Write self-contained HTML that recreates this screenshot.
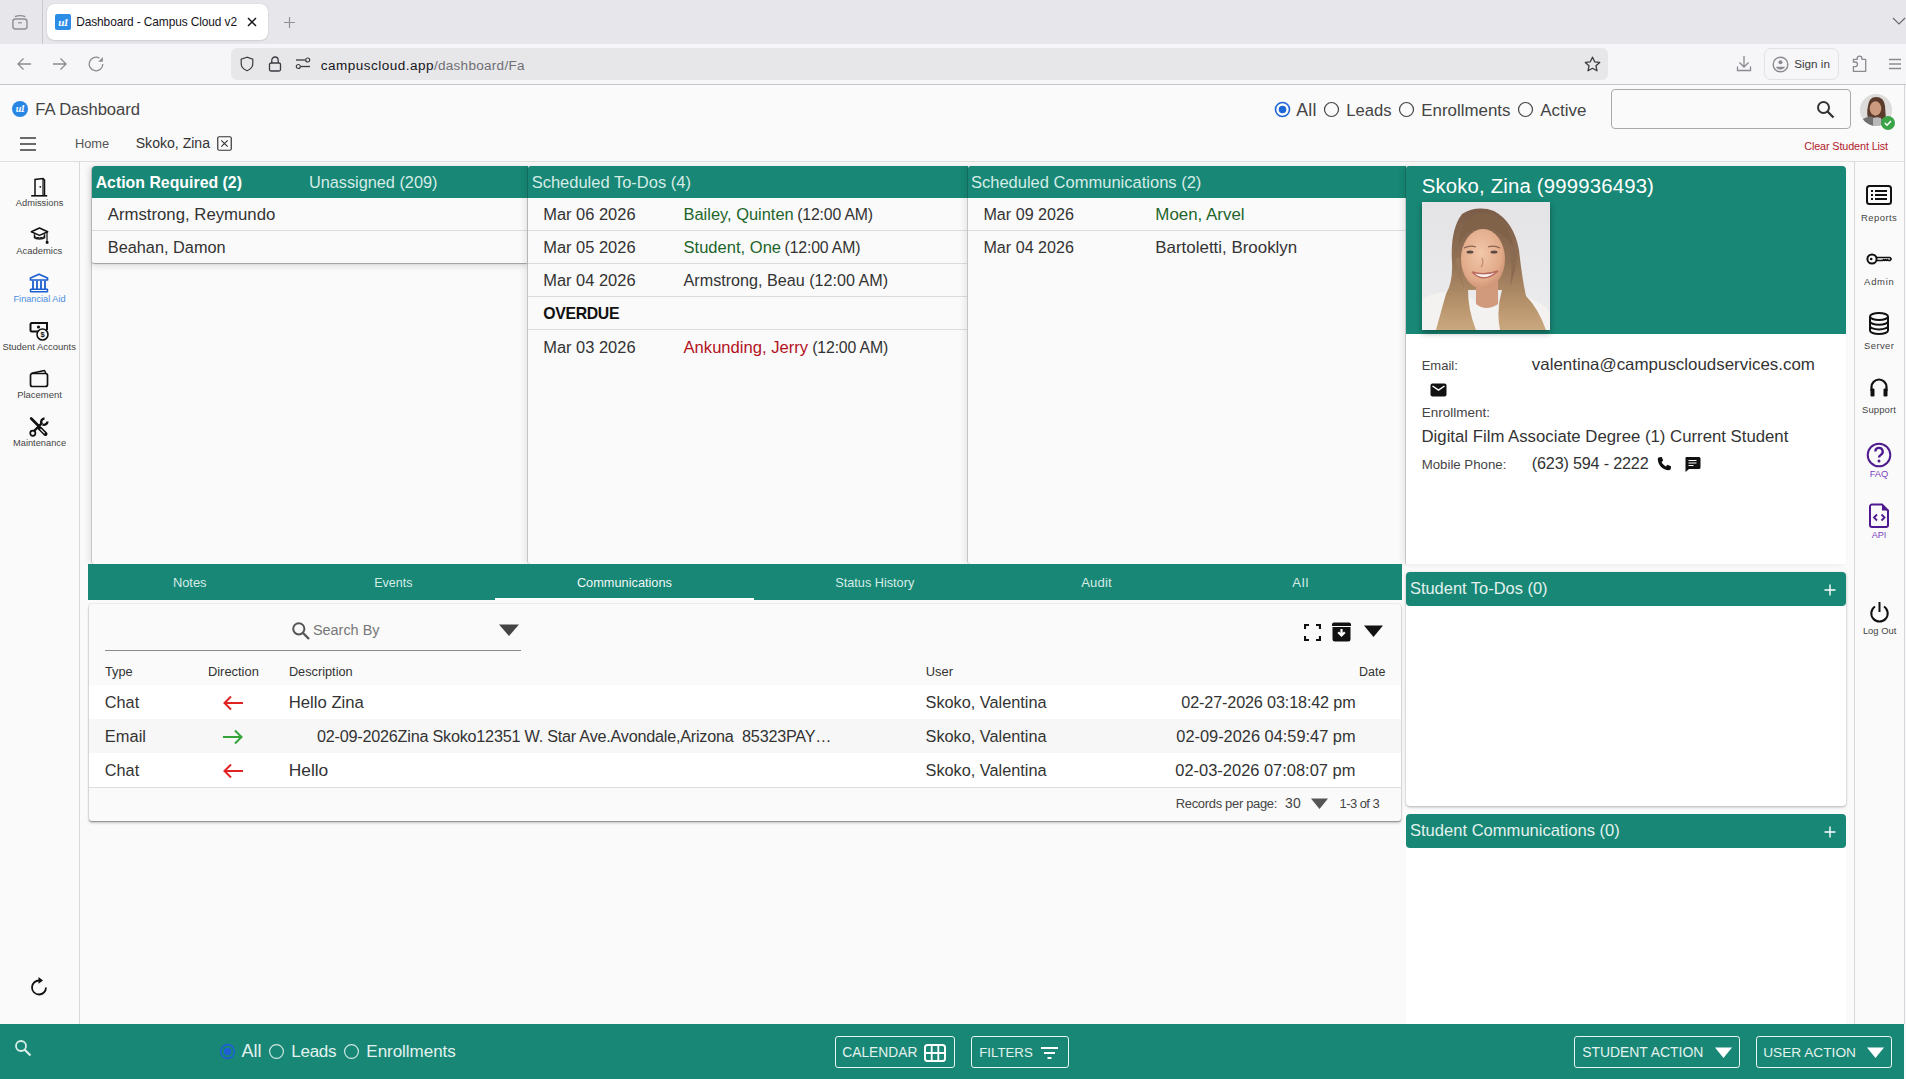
<!DOCTYPE html><html><head><meta charset="utf-8"><title>Dashboard - Campus Cloud v2</title><style>
*{margin:0;padding:0;box-sizing:border-box}
html,body{width:1906px;height:1079px;overflow:hidden;background:#fafafa;font-family:"Liberation Sans",sans-serif}
.t{position:absolute;white-space:pre;line-height:1}
</style></head><body>
<div style="position:absolute;left:0px;top:0px;width:1906px;height:44px;background:#e7e6eb"></div>
<div style="position:absolute;left:42px;top:0px;width:1px;height:44px;background:#c9c8cf"></div>
<div style="position:absolute;left:47px;top:4px;width:221px;height:36px;background:#fff;border-radius:7px;box-shadow:0 0 1px rgba(0,0,0,.25),0 1px 2px rgba(0,0,0,.08)"></div>
<svg style="position:absolute;left:11px;top:13px;" width="18" height="18" viewBox="0 0 18 18"><rect x="1.9" y="6" width="14.1" height="10" rx="2.6" fill="none" stroke="#8e8e94" stroke-width="1.4"/><path d="M3.9 3.6Q9 1.6 14.3 3.6" fill="none" stroke="#8e8e94" stroke-width="1.3"/><path d="M7 9.8h3.8" stroke="#8e8e94" stroke-width="1.2"/></svg>
<div style="position:absolute;left:55px;top:14px;width:16px;height:16px;background:#2b8de6;border-radius:2px;color:#fff;font:italic bold 11px/16px 'Liberation Serif',serif;text-align:center;letter-spacing:-1px">u1</div>
<svg style="position:absolute;left:246px;top:16px;" width="12" height="12" viewBox="0 0 12 12"><path d="M2 2L10 10M10 2L2 10" stroke="#15141a" stroke-width="1.5"/></svg>
<svg style="position:absolute;left:283px;top:16px;" width="13" height="13" viewBox="0 0 13 13"><path d="M6.5 1v11M1 6.5h11" stroke="#8f8f95" stroke-width="1.2"/></svg>
<svg style="position:absolute;left:1892px;top:16px;" width="14" height="10" viewBox="0 0 14 10"><path d="M1 2l6 6 6-6" fill="none" stroke="#6a6a70" stroke-width="1.2"/></svg>
<div style="position:absolute;left:0px;top:44px;width:1906px;height:40px;background:#f6f6f8"></div>
<div style="position:absolute;left:0px;top:84px;width:1906px;height:1px;background:#c6c6c8"></div>
<svg style="position:absolute;left:16px;top:56px;" width="16" height="16" viewBox="0 0 16 16"><path d="M15 8H2M7.5 2.5L2 8l5.5 5.5" fill="none" stroke="#8a8a90" stroke-width="1.3"/></svg>
<svg style="position:absolute;left:52px;top:56px;" width="16" height="16" viewBox="0 0 16 16"><path d="M1 8h13M8.5 2.5L14 8l-5.5 5.5" fill="none" stroke="#8a8a90" stroke-width="1.3"/></svg>
<svg style="position:absolute;left:87px;top:55px;" width="18" height="18" viewBox="0 0 18 18"><path d="M15.8 9A6.8 6.8 0 1 1 12.4 3.1" fill="none" stroke="#8a8a90" stroke-width="1.3"/><path d="M11.2 6.7h4.7V2z" fill="#8a8a90"/></svg>
<div style="position:absolute;left:231px;top:48px;width:1377px;height:32px;background:#e7e7e9;border-radius:6px"></div>
<svg style="position:absolute;left:239px;top:56px;" width="16" height="16" viewBox="0 0 16 16"><path d="M8 1.2L2.2 3.2v4.3c0 3.4 2.5 5.9 5.8 7.2 3.3-1.3 5.8-3.8 5.8-7.2V3.2z" fill="none" stroke="#3a3a40" stroke-width="1.2"/></svg>
<svg style="position:absolute;left:267px;top:55px;" width="16" height="17" viewBox="0 0 16 17"><rect x="2.5" y="8" width="11" height="8" rx="1.5" fill="none" stroke="#3a3a40" stroke-width="1.3"/><path d="M4.8 8V5.2a3.2 3.2 0 0 1 6.4 0V8" fill="none" stroke="#3a3a40" stroke-width="1.3"/></svg>
<svg style="position:absolute;left:295px;top:57px;" width="16" height="13" viewBox="0 0 16 13"><circle cx="3.3" cy="9.5" r="2" fill="none" stroke="#3a3a40" stroke-width="1.2"/><path d="M6 9.5h9" stroke="#3a3a40" stroke-width="1.3"/><circle cx="12.7" cy="3" r="2" fill="none" stroke="#3a3a40" stroke-width="1.2"/><path d="M1 3h9" stroke="#3a3a40" stroke-width="1.3"/></svg>
<svg style="position:absolute;left:1584px;top:56px;" width="17" height="16" viewBox="0 0 17 16"><path d="M8.5 1.2l2.2 4.6 5 .6-3.7 3.4 1 5-4.5-2.5-4.5 2.5 1-5L1.3 6.4l5-.6z" fill="none" stroke="#3a3a40" stroke-width="1.3" stroke-linejoin="round"/></svg>
<svg style="position:absolute;left:1736px;top:55px;" width="16" height="17" viewBox="0 0 16 17"><path d="M8 1v11M3.5 7.5L8 12l4.5-4.5" fill="none" stroke="#8a8a90" stroke-width="1.3"/><path d="M1.5 11.5v4h13v-4" fill="none" stroke="#8a8a90" stroke-width="1.3"/></svg>
<div style="position:absolute;left:1764px;top:48px;width:75px;height:32px;border:1px solid #e2e2e6;border-radius:7px;background:#f6f6f8"></div>
<svg style="position:absolute;left:1772px;top:56px;" width="17" height="17" viewBox="0 0 17 17"><circle cx="8.5" cy="8.5" r="7.3" fill="none" stroke="#8a8a90" stroke-width="1.4"/><circle cx="8.5" cy="6.3" r="2" fill="#8a8a90"/><path d="M4.3 10.8h8.4v1a5.8 5.8 0 0 1-8.4 0z" fill="#8a8a90"/></svg>
<svg style="position:absolute;left:1851px;top:55px;" width="17" height="17" viewBox="0 0 17 17"><path d="M2.4 16.3V11.6h1.8a2.3 2.3 0 0 0 0-4.6H2.4V4.4H6.2V3.6a2.4 2.4 0 0 1 4.8 0v.8h3.7v11.9z" fill="none" stroke="#8a8a90" stroke-width="1.3" stroke-linejoin="round"/></svg>
<svg style="position:absolute;left:1888px;top:58px;" width="14" height="12" viewBox="0 0 14 12"><path d="M1 1.5h12M1 6h12M1 10.5h12" stroke="#8a8a90" stroke-width="1.3"/></svg>
<div style="position:absolute;left:1904px;top:85px;width:1px;height:939px;background:#d6d6d6"></div>
<div style="position:absolute;left:1905px;top:85px;width:1px;height:994px;background:#f9f9fb"></div>
<div style="position:absolute;left:0px;top:161px;width:1904px;height:1px;background:#dedede"></div>
<div style="position:absolute;left:12px;top:101px;width:16px;height:16px;background:#2a86e4;border-radius:50%;color:#fff;font:italic bold 10px/16px 'Liberation Serif',serif;text-align:center;letter-spacing:-1px">u1</div>
<svg style="position:absolute;left:19px;top:136px;" width="18" height="16" viewBox="0 0 18 16"><path d="M1 2h16M1 8h16M1 14h16" stroke="#3a3a3a" stroke-width="1.7"/></svg>
<svg style="position:absolute;left:217px;top:136px;" width="15" height="15" viewBox="0 0 15 15"><rect x="0.75" y="0.75" width="13.5" height="13.5" rx="1.5" fill="none" stroke="#333" stroke-width="1.2"/><path d="M4.3 4.3l6.4 6.4M10.7 4.3l-6.4 6.4" stroke="#333" stroke-width="1.1"/></svg>
<svg style="position:absolute;left:1274.0px;top:101.3px;" width="17.0" height="17.0" viewBox="0 0 17.0 17.0"><circle cx="8.5" cy="8.5" r="7.0" fill="none" stroke="#1f66d6" stroke-width="1.6"/><circle cx="8.5" cy="8.5" r="3.75" fill="#1f66d6"/></svg>
<svg style="position:absolute;left:1323.0px;top:101.3px;" width="17.0" height="17.0" viewBox="0 0 17.0 17.0"><circle cx="8.5" cy="8.5" r="7.0" fill="none" stroke="#444" stroke-width="1.2"/></svg>
<svg style="position:absolute;left:1397.7px;top:101.3px;" width="17.0" height="17.0" viewBox="0 0 17.0 17.0"><circle cx="8.5" cy="8.5" r="7.0" fill="none" stroke="#444" stroke-width="1.2"/></svg>
<svg style="position:absolute;left:1517.0px;top:101.3px;" width="17.0" height="17.0" viewBox="0 0 17.0 17.0"><circle cx="8.5" cy="8.5" r="7.0" fill="none" stroke="#444" stroke-width="1.2"/></svg>
<div style="position:absolute;left:1611px;top:89px;width:240px;height:40px;border:1px solid #a9a9a9;border-radius:4px;background:#fafafa"></div>
<svg style="position:absolute;left:1816px;top:100px;" width="20" height="20" viewBox="0 0 20 20"><circle cx="7.5" cy="7.5" r="5.5" fill="none" stroke="#333" stroke-width="2"/><path d="M11.5 11.5L17.5 17.5" stroke="#333" stroke-width="2.3"/></svg>
<svg style="position:absolute;left:1860px;top:94px;" width="36" height="37" viewBox="0 0 36 37"><defs><clipPath id="av"><circle cx="16" cy="16" r="16"/></clipPath></defs>
<g clip-path="url(#av)"><rect width="32" height="32" fill="#dedcda"/>
<path d="M8 12 Q9 3 16 3 Q24 3 25 12 L26 26 Q22 30 18 28 L9 26 Q6 20 8 12z" fill="#5b3b2b"/>
<ellipse cx="15.5" cy="14.5" rx="5.8" ry="7.2" fill="#cc9a7e"/>
<path d="M0 32 L2 26 Q8 21 13 23 L15 32z" fill="#707070"/>
<path d="M13 32 L13 24 Q17 22.5 21 24 L21 32z" fill="#b9b9b9"/>
<path d="M21 32 L21 25 Q26 24 30 28 L32 32z" fill="#7a7a7a"/>
</g>
<circle cx="28" cy="29" r="7" fill="#3aa447"/><path d="M24.8 29l2.2 2.2 4-4.2" fill="none" stroke="#fff" stroke-width="1.6"/></svg>
<div style="position:absolute;left:79px;top:162px;width:1px;height:862px;background:#d9d9d9"></div>
<svg style="position:absolute;left:30px;top:177px;" width="19" height="20" viewBox="0 0 19 20"><path d="M5 18.5V2.5L13 1.5l1.5 1.5V18.5" fill="none" stroke="#111" stroke-width="1.5"/><path d="M13 2v16.5" stroke="#111" stroke-width="1.2"/><path d="M14.5 2.8h-1.5" stroke="#111" stroke-width="1"/><circle cx="10.3" cy="9.8" r="0.9" fill="#111"/><path d="M1.2 18.8h16" stroke="#111" stroke-width="1.6"/></svg>
<svg style="position:absolute;left:30px;top:227px;" width="20" height="18" viewBox="0 0 20 18"><path d="M1.3 4.8L9.5 1l8.2 3.8-8.2 3.6z" fill="none" stroke="#111" stroke-width="1.5" stroke-linejoin="round"/><path d="M4.5 7.2v3.5c1.5 1.6 8.5 1.6 10 0V7.2" fill="none" stroke="#111" stroke-width="1.5"/><path d="M5 9.8c1.5 1.2 7.5 1.2 9 0" fill="none" stroke="#111" stroke-width="1"/><path d="M17 5v10" stroke="#111" stroke-width="1.2"/><rect x="15.8" y="14" width="2.6" height="2.8" fill="#111"/></svg>
<svg style="position:absolute;left:29px;top:273px;" width="20" height="20" viewBox="0 0 20 20"><path d="M10 1.2L1.5 5v2h17V5z" fill="none" stroke="#1b5fd0" stroke-width="1.7" stroke-linejoin="round"/><path d="M4 7.5v9M8 7.5v9M12 7.5v9M16 7.5v9" stroke="#1b5fd0" stroke-width="1.8"/><rect x="1.5" y="16.2" width="17" height="2.6" rx=".5" fill="none" stroke="#1b5fd0" stroke-width="1.5"/></svg>
<svg style="position:absolute;left:29px;top:321px;" width="21" height="20" viewBox="0 0 21 20"><path d="M14 2H3a1.5 1.5 0 0 0-1.5 1.5V9A1.5 1.5 0 0 0 3 10.5h6" fill="none" stroke="#111" stroke-width="2"/><path d="M2 2h16v7" fill="none" stroke="#111" stroke-width="2"/><circle cx="9.5" cy="6" r="1.6" fill="#111"/><circle cx="13.5" cy="13.5" r="5.5" fill="#fafafa" stroke="#111" stroke-width="1.6"/><text x="13.5" y="16.3" font-size="7.5" text-anchor="middle" font-family="Liberation Sans" font-weight="bold" fill="#111">$</text></svg>
<svg style="position:absolute;left:29px;top:369px;" width="20" height="19" viewBox="0 0 20 19"><rect x="1.5" y="4.5" width="17" height="13" rx="2" fill="none" stroke="#111" stroke-width="1.7"/><path d="M2.5 4.3L15.5 1.5l1.2 2.5" fill="none" stroke="#111" stroke-width="1.5" stroke-linejoin="round"/></svg>
<svg style="position:absolute;left:29px;top:417px;" width="20" height="20" viewBox="0 0 20 20"><path d="M2.2 1.5l7.5 7.5" stroke="#111" stroke-width="2.6" stroke-linecap="round"/><path d="M9 9l8.2 8.2" stroke="#111" stroke-width="0"/><path d="M10.5 11l6 6" stroke="#111" stroke-width="4" stroke-linecap="round"/><path d="M11.8 12.3l3.5 3.5" stroke="#fafafa" stroke-width="1.2" stroke-linecap="round"/><path d="M15.5 1.5a3.5 3.5 0 0 0-3 5L4 15" fill="none" stroke="#111" stroke-width="2.4"/><path d="M18.5 4.5a3.5 3.5 0 0 1-5 3" fill="none" stroke="#111" stroke-width="2.4"/><circle cx="3.8" cy="16.2" r="2.6" fill="#fafafa" stroke="#111" stroke-width="1.7"/></svg>
<svg style="position:absolute;left:29px;top:976px;" width="21" height="22" viewBox="0 0 21 22"><path d="M17 11.5A7 7 0 1 1 10.5 4.5" fill="none" stroke="#111" stroke-width="1.8"/><path d="M9.5 1l4.5 3.5-4.5 3.3z" fill="#111"/></svg>
<div style="position:absolute;left:1854px;top:162px;width:1px;height:862px;background:#d9d9d9"></div>
<svg style="position:absolute;left:1866px;top:185px;" width="26" height="20" viewBox="0 0 26 20"><rect x="1" y="1" width="24" height="18" rx="2.5" fill="none" stroke="#111" stroke-width="2"/><path d="M5 6h2M5 10h2M5 14h2M9 6h12M9 10h12M9 14h12" stroke="#111" stroke-width="1.8"/></svg>
<svg style="position:absolute;left:1866px;top:252px;" width="26" height="14" viewBox="0 0 26 14"><circle cx="6" cy="7" r="4.6" fill="none" stroke="#111" stroke-width="2"/><circle cx="5.2" cy="7" r="1.3" fill="#111"/><path d="M10.5 5.5h13.5l1.2 1.5-1.2 1.5h-1.5l-1-1-1 1-1-1-1 1-1-1-1 1H10.5" fill="none" stroke="#111" stroke-width="1.6" stroke-linejoin="round"/></svg>
<svg style="position:absolute;left:1868px;top:312px;" width="22" height="23" viewBox="0 0 22 23"><ellipse cx="11" cy="4.5" rx="9" ry="3.5" fill="none" stroke="#111" stroke-width="2"/><path d="M2 4.5v14c0 2 4 3.5 9 3.5s9-1.5 9-3.5v-14M2 9.2c0 2 4 3.5 9 3.5s9-1.5 9-3.5M2 13.9c0 2 4 3.5 9 3.5s9-1.5 9-3.5" fill="none" stroke="#111" stroke-width="2"/></svg>
<svg style="position:absolute;left:1869px;top:377px;" width="20" height="20" viewBox="0 0 20 20"><path d="M2.5 14V10a7.5 7.5 0 0 1 15 0v4" fill="none" stroke="#111" stroke-width="2.2"/><rect x="1.5" y="11.5" width="4" height="8" rx="1.2" fill="#111"/><rect x="14.5" y="11.5" width="4" height="8" rx="1.2" fill="#111"/></svg>
<svg style="position:absolute;left:1866px;top:442px;" width="26" height="26" viewBox="0 0 26 26"><circle cx="13" cy="13" r="11.3" fill="none" stroke="#4e1a8f" stroke-width="2"/><path d="M9.3 9.6a3.7 3.7 0 1 1 5.4 3.3c-1.1.6-1.7 1.3-1.7 2.6" fill="none" stroke="#4e1a8f" stroke-width="2.3"/><circle cx="13" cy="19" r="1.5" fill="#4e1a8f"/></svg>
<svg style="position:absolute;left:1869px;top:503px;" width="21" height="26" viewBox="0 0 21 26"><path d="M3 1.5h10l6 6V22a2 2 0 0 1-2 2H3a2 2 0 0 1-2-2V3.5a2 2 0 0 1 2-2z" fill="none" stroke="#4e1a8f" stroke-width="2"/><path d="M13 1.5v6h6z" fill="#4e1a8f"/><path d="M8 11.5l-3 3 3 3M12.5 11.5l3 3-3 3" fill="none" stroke="#4e1a8f" stroke-width="1.8"/></svg>
<svg style="position:absolute;left:1869px;top:601px;" width="21" height="23" viewBox="0 0 21 23"><path d="M6 5.5A8.2 8.2 0 1 0 15 5.5" fill="none" stroke="#111" stroke-width="2"/><path d="M10.5 1v10" stroke="#111" stroke-width="2"/></svg>
<div style="position:absolute;left:92px;top:166px;width:436px;height:398px;background:#fafafa;border-radius:4px 0 0 3px;box-shadow:-1px 0 0 rgba(0,0,0,.15), -3px 0 6px rgba(0,0,0,.09)"></div>
<div style="position:absolute;left:92px;top:166px;width:435px;height:97px;background:#fafafa;border-radius:4px 0 0 2px;box-shadow:0 1px 1px rgba(0,0,0,.3), 0 3px 6px rgba(0,0,0,.12)"></div>
<div style="position:absolute;left:92px;top:166px;width:436px;height:32px;background:#188775;border-radius:4px 0 0 0"></div>
<div style="position:absolute;left:92px;top:230px;width:435px;height:1px;background:#dcdcdc"></div>
<div style="position:absolute;left:528px;top:166px;width:440px;height:398px;background:#fafafa;border-radius:3px 0 0 3px;box-shadow:-1px 0 0 rgba(0,0,0,.15), -3px 0 6px rgba(0,0,0,.09)"></div>
<div style="position:absolute;left:528px;top:166px;width:440px;height:32px;background:#188775;border-radius:3px 0 0 0"></div>
<div style="position:absolute;left:528px;top:230px;width:439px;height:1px;background:#dcdcdc"></div>
<div style="position:absolute;left:528px;top:263px;width:439px;height:1px;background:#dcdcdc"></div>
<div style="position:absolute;left:528px;top:296px;width:439px;height:1px;background:#dcdcdc"></div>
<div style="position:absolute;left:528px;top:329px;width:439px;height:1px;background:#dcdcdc"></div>
<div style="position:absolute;left:968px;top:166px;width:438px;height:398px;background:#fafafa;border-radius:3px 0 0 3px;box-shadow:-1px 0 0 rgba(0,0,0,.15), -3px 0 6px rgba(0,0,0,.09)"></div>
<div style="position:absolute;left:968px;top:166px;width:438px;height:32px;background:#188775;border-radius:3px 0 0 0"></div>
<div style="position:absolute;left:968px;top:230px;width:437px;height:1px;background:#dcdcdc"></div>
<div style="position:absolute;left:1406px;top:166px;width:440px;height:398px;background:#fff;border-radius:3px 4px 0 0;box-shadow:-1px 0 0 rgba(0,0,0,.15), -3px 0 6px rgba(0,0,0,.09)"></div>
<div style="position:absolute;left:1406px;top:166px;width:440px;height:168px;background:#188775;border-radius:3px 4px 0 0"></div>
<svg style="position:absolute;left:1430px;top:383px;" width="17" height="14" viewBox="0 0 17 14"><rect x="0.5" y="0.5" width="16" height="13" rx="2" fill="#111"/><path d="M2.5 3l6 4 6-4" fill="none" stroke="#fff" stroke-width="1.5"/></svg>
<svg style="position:absolute;left:1656px;top:456px;" width="16" height="16" viewBox="0 0 16 16"><path d="M3.2 1.2l2.6-.2 1.4 3.6-1.6 1.5c.9 2 2.3 3.4 4.3 4.3l1.5-1.6 3.6 1.4-.2 2.6c-.2.9-1 1.4-2 1.4C6.8 14 2 9.2 1.8 3.2c0-1 .5-1.8 1.4-2z" fill="#111"/></svg>
<svg style="position:absolute;left:1684px;top:456px;" width="17" height="16" viewBox="0 0 17 16"><path d="M2 1h13a1.5 1.5 0 0 1 1.5 1.5v9A1.5 1.5 0 0 1 15 13H5l-3.5 3V2.5A1.5 1.5 0 0 1 2 1z" fill="#111"/><path d="M4.5 4.5h8M4.5 7h8M4.5 9.5h5" stroke="#fff" stroke-width="1.2"/></svg>
<div style="position:absolute;left:1406px;top:572px;width:440px;height:234px;background:#fff;border-radius:4px;box-shadow:0 1px 3px rgba(0,0,0,.3)"></div>
<div style="position:absolute;left:1406px;top:572px;width:440px;height:34px;background:#188775;border-radius:4px"></div>
<div style="position:absolute;left:1406px;top:814px;width:440px;height:210px;background:#fff;border-radius:4px 4px 0 0"></div>
<div style="position:absolute;left:1406px;top:814px;width:440px;height:34px;background:#188775;border-radius:4px"></div>
<svg style="position:absolute;left:1823px;top:583px;" width="14" height="14" viewBox="0 0 14 14"><path d="M7 1.5v11M1.5 7h11" stroke="#fff" stroke-width="1.4"/></svg>
<svg style="position:absolute;left:1823px;top:825px;" width="14" height="14" viewBox="0 0 14 14"><path d="M7 1.5v11M1.5 7h11" stroke="#fff" stroke-width="1.4"/></svg>
<div style="position:absolute;left:88px;top:564px;width:1314px;height:36px;background:#188775"></div>
<div style="position:absolute;left:495px;top:598px;width:259px;height:2px;background:#fff"></div>
<div style="position:absolute;left:89px;top:604px;width:1312px;height:217px;background:#fafafa;border-radius:3px;box-shadow:0 0 0 1px rgba(0,0,0,.05),0 1px 1px rgba(0,0,0,.25),0 2px 3px rgba(0,0,0,.2)"></div>
<svg style="position:absolute;left:291px;top:621px;" width="20" height="20" viewBox="0 0 20 20"><circle cx="7.8" cy="7.8" r="5.6" fill="none" stroke="#555" stroke-width="2"/><path d="M12 12l6 6" stroke="#555" stroke-width="2.4"/></svg>
<div style="position:absolute;left:105px;top:650px;width:416px;height:1px;background:#8a8a8a"></div>
<svg style="position:absolute;left:498px;top:623px;" width="22" height="14" viewBox="0 0 22 14"><path d="M1 1.5h20L11 13z" fill="#444"/></svg>
<svg style="position:absolute;left:1304px;top:624px;" width="17" height="17" viewBox="0 0 17 17"><path d="M1 5V1h4M12 1h4v4M16 12v4h-4M5 16H1v-4" fill="none" stroke="#111" stroke-width="2.2"/></svg>
<svg style="position:absolute;left:1331px;top:621px;" width="21" height="21" viewBox="0 0 21 21"><path d="M3 1.5h15a2 2 0 0 1 2 2V5H1V3.5a2 2 0 0 1 2-2z" fill="#111"/><path d="M1.5 6h18v12a2.5 2.5 0 0 1-2.5 2.5H4A2.5 2.5 0 0 1 1.5 18z" fill="#111"/><path d="M10.5 8v6.5M7.2 11.2l3.3 3.3 3.3-3.3" fill="none" stroke="#fff" stroke-width="2.2"/></svg>
<svg style="position:absolute;left:1363px;top:624px;" width="21" height="14" viewBox="0 0 21 14"><path d="M1 1.5h19L10.5 13z" fill="#111"/></svg>
<div style="position:absolute;left:89px;top:685px;width:1312px;height:34px;background:#fff"></div>
<div style="position:absolute;left:89px;top:719px;width:1312px;height:34px;background:#f7f7f7"></div>
<div style="position:absolute;left:89px;top:753px;width:1312px;height:34px;background:#fff"></div>
<div style="position:absolute;left:89px;top:787px;width:1312px;height:1px;background:#dedede"></div>
<svg style="position:absolute;left:222px;top:695px;" width="22" height="16" viewBox="0 0 22 16"><path d="M21 8H2.5M9 1.5L2.5 8 9 14.5" fill="none" stroke="#e02424" stroke-width="2"/></svg>
<svg style="position:absolute;left:222px;top:729px;" width="22" height="16" viewBox="0 0 22 16"><path d="M1 8h18.5M13 1.5L19.5 8 13 14.5" fill="none" stroke="#34a33a" stroke-width="2"/></svg>
<svg style="position:absolute;left:222px;top:763px;" width="22" height="16" viewBox="0 0 22 16"><path d="M21 8H2.5M9 1.5L2.5 8 9 14.5" fill="none" stroke="#e02424" stroke-width="2"/></svg>
<svg style="position:absolute;left:1310px;top:797px;" width="19" height="13" viewBox="0 0 19 13"><path d="M1 1.5h17L9.5 12z" fill="#555"/></svg>
<div style="position:absolute;left:0px;top:1024px;width:1904px;height:55px;background:#188775"></div>
<svg style="position:absolute;left:14px;top:1039px;" width="20" height="18" viewBox="0 0 20 18"><circle cx="7" cy="7" r="5" fill="none" stroke="#d8eee9" stroke-width="1.8"/><path d="M10.5 10.5l6 6" stroke="#d8eee9" stroke-width="2.2"/></svg>
<svg style="position:absolute;left:218.9px;top:1043.1px;" width="17.0" height="17.0" viewBox="0 0 17.0 17.0"><circle cx="8.5" cy="8.5" r="6.9" fill="none" stroke="#1f5fd6" stroke-width="1.6"/><circle cx="8.5" cy="8.5" r="3.8" fill="#1f5fd6"/></svg>
<svg style="position:absolute;left:268.0px;top:1043.1px;" width="17.0" height="17.0" viewBox="0 0 17.0 17.0"><circle cx="8.5" cy="8.5" r="6.9" fill="none" stroke="#cfe9e3" stroke-width="1.2"/></svg>
<svg style="position:absolute;left:342.8px;top:1043.1px;" width="17.0" height="17.0" viewBox="0 0 17.0 17.0"><circle cx="8.5" cy="8.5" r="6.9" fill="none" stroke="#cfe9e3" stroke-width="1.2"/></svg>
<div style="position:absolute;left:835px;top:1036px;width:120px;height:32px;border:1px solid #e8f4f1;border-radius:3px"></div>
<div style="position:absolute;left:971px;top:1036px;width:98px;height:32px;border:1px solid #e8f4f1;border-radius:3px"></div>
<div style="position:absolute;left:1574px;top:1036px;width:166px;height:32px;border:1px solid #e8f4f1;border-radius:3px"></div>
<div style="position:absolute;left:1756px;top:1036px;width:136px;height:32px;border:1px solid #e8f4f1;border-radius:3px"></div>
<svg style="position:absolute;left:924px;top:1044px;" width="22" height="18" viewBox="0 0 22 18"><rect x="1" y="1" width="20" height="16" rx="2.5" fill="none" stroke="#fff" stroke-width="2"/><path d="M7.7 1v16M14.3 1v16M1 9h20" stroke="#fff" stroke-width="1.8"/></svg>
<svg style="position:absolute;left:1040px;top:1046px;" width="19" height="14" viewBox="0 0 19 14"><path d="M1 2h17M4 7h11M7.5 12h4" stroke="#fff" stroke-width="2"/></svg>
<svg style="position:absolute;left:1714px;top:1046px;" width="19" height="13" viewBox="0 0 19 13"><path d="M1 1.5h17L9.5 12z" fill="#fff"/></svg>
<svg style="position:absolute;left:1866px;top:1046px;" width="19" height="13" viewBox="0 0 19 13"><path d="M1 1.5h17L9.5 12z" fill="#fff"/></svg>
<div style="position:absolute;left:1422px;top:202px;width:128px;height:128px;box-shadow:0 3px 6px rgba(0,0,0,.35)"></div>
<svg style="position:absolute;left:1422px;top:202px;" width="128" height="128" viewBox="0 0 128 128"><defs>
<linearGradient id="bg" x1="0" y1="0" x2="0" y2="1"><stop offset="0" stop-color="#e4e4e6"/><stop offset="1" stop-color="#ececee"/></linearGradient>
<linearGradient id="hair" x1="0" y1="0" x2="0" y2="1"><stop offset="0" stop-color="#7a5c48"/><stop offset=".45" stop-color="#937256"/><stop offset=".8" stop-color="#b8946c"/><stop offset="1" stop-color="#caa87e"/></linearGradient>
<radialGradient id="skin" cx=".45" cy=".4" r=".65"><stop offset="0" stop-color="#f2c7aa"/><stop offset=".7" stop-color="#e2ab8a"/><stop offset="1" stop-color="#c98f70"/></radialGradient>
</defs>
<rect width="128" height="128" fill="url(#bg)"/>
<path d="M0 128 L0 98 Q10 90 26 90 L44 92 L62 106 L80 104 L100 94 Q118 98 128 110 L128 128 Z" fill="#f4f2f0"/>
<path d="M40 12 Q55 3 72 9 Q92 20 97 48 Q100 76 104 94 Q116 106 124 128 L78 128 Q74 108 80 88 L46 88 Q46 108 54 128 L14 128 Q20 106 24 92 Q31 80 30 60 Q28 28 40 12 Z" fill="url(#hair)"/>
<path d="M54 78 L54 102 Q64 110 76 102 L76 78 Z" fill="#d29a7c"/>
<ellipse cx="61" cy="57" rx="22" ry="30" fill="url(#skin)"/>
<path d="M37 44 Q38 16 58 11 Q84 10 92 46 Q86 34 72 28 Q56 24 46 30 Q40 34 37 44 Z" fill="#806249"/>
<path d="M86 40 Q92 60 88 84 Q94 70 95 50 Z" fill="#8a6a50"/>
<path d="M33 56 Q36 76 42 86 Q38 70 38 56 Z" fill="#9a7858"/>
<path d="M42 46 q6 -3 12 -1 M66 45 q6 -2 12 1" stroke="#8a6650" stroke-width="1.3" fill="none"/>
<ellipse cx="48" cy="50" rx="3.5" ry="1.6" fill="#5c4a42"/>
<ellipse cx="72" cy="50" rx="3.5" ry="1.6" fill="#5c4a42"/>
<path d="M50 70 Q62 82 76 69 Q62 74 50 70 Z" fill="#fbf6f2" stroke="#b86a5e" stroke-width="1.4"/>
<path d="M60 56 q2 6 -1 9" stroke="#c48a6c" stroke-width="1.2" fill="none"/>
</svg>
<div class="t" style="left:76.22px;top:17.40px;font-size:11.9px;color:#15141a;letter-spacing:-0.093px;">Dashboard - Campus Cloud v2</div>
<div class="t" style="left:320.76px;top:59.21px;font-size:13.52px;color:#15141a;letter-spacing:0.492px;">campuscloud.app</div>
<div class="t" style="left:433.96px;top:59.21px;font-size:13.52px;color:#6e6e74;letter-spacing:0.281px;">/dashboard/Fa</div>
<div class="t" style="left:1794.23px;top:58.41px;font-size:11.69px;color:#3a3a40;">Sign in</div>
<div class="t" style="left:35.33px;top:102.01px;font-size:16.63px;color:#444;letter-spacing:-0.064px;">FA Dashboard</div>
<div class="t" style="left:74.99px;top:138.11px;font-size:12.82px;color:#555;">Home</div>
<div class="t" style="left:135.74px;top:136.01px;font-size:14.07px;color:#333;">Skoko, Zina</div>
<div class="t" style="left:1296.29px;top:101.51px;font-size:17.73px;color:#444;letter-spacing:0.269px;">All</div>
<div class="t" style="left:1346.34px;top:102.51px;font-size:16.59px;color:#444;">Leads</div>
<div class="t" style="left:1421.32px;top:102.50px;font-size:16.9px;color:#444;">Enrollments</div>
<div class="t" style="left:1540.32px;top:102.51px;font-size:16.97px;color:#444;">Active</div>
<div class="t" style="left:1804.27px;top:141.01px;font-size:10.81px;color:#b3202b;letter-spacing:-0.116px;">Clear Student List</div>
<div class="t" style="left:15.83px;top:198.81px;font-size:9.29px;color:#444;">Admissions</div>
<div class="t" style="left:16.32px;top:245.51px;font-size:9.41px;color:#444;">Academics</div>
<div class="t" style="left:13.53px;top:294.60px;font-size:9.19px;color:#4a8fe0;">Financial Aid</div>
<div class="t" style="left:2.42px;top:341.80px;font-size:9.45px;color:#444;">Student Accounts</div>
<div class="t" style="left:17.22px;top:389.80px;font-size:9.45px;color:#444;">Placement</div>
<div class="t" style="left:13.03px;top:438.71px;font-size:9.27px;color:#444;">Maintenance</div>
<div class="t" style="left:1861.12px;top:213.00px;font-size:9.45px;color:#444;letter-spacing:0.436px;">Reports</div>
<div class="t" style="left:1864.12px;top:277.00px;font-size:9.45px;color:#444;letter-spacing:0.724px;">Admin</div>
<div class="t" style="left:1864.12px;top:340.71px;font-size:9.45px;color:#444;letter-spacing:0.373px;">Server</div>
<div class="t" style="left:1862.12px;top:404.50px;font-size:9.45px;color:#444;letter-spacing:0.1px;">Support</div>
<div class="t" style="left:1869.63px;top:469.51px;font-size:9.33px;color:#7b3fbf;">FAQ</div>
<div class="t" style="left:1871.64px;top:530.60px;font-size:9.09px;color:#7b3fbf;">API</div>
<div class="t" style="left:1862.92px;top:627.01px;font-size:9.38px;color:#444;">Log Out</div>
<div class="t" style="left:95.67px;top:174.81px;font-size:15.86px;color:#fff;font-weight:700;">Action Required (2)</div>
<div class="t" style="left:308.95px;top:173.80px;font-size:16.3px;color:#d5ece7;">Unassigned (209)</div>
<div class="t" style="left:107.73px;top:207.01px;font-size:16.76px;color:#333;">Armstrong, Reymundo</div>
<div class="t" style="left:107.75px;top:238.91px;font-size:16.32px;color:#333;">Beahan, Damon</div>
<div class="t" style="left:531.64px;top:173.81px;font-size:16.51px;color:#d5ece7;">Scheduled To-Dos (4)</div>
<div class="t" style="left:543.24px;top:206.41px;font-size:16.45px;color:#333;">Mar 06 2026</div>
<div class="t" style="left:683.54px;top:206.40px;font-size:16.43px;color:#22652a;">Bailey, Quinten</div>
<div class="t" style="left:797.17px;top:207.40px;font-size:15.82px;color:#333;letter-spacing:-0.16px;">(12:00 AM)</div>
<div class="t" style="left:543.24px;top:239.21px;font-size:16.45px;color:#333;">Mar 05 2026</div>
<div class="t" style="left:683.54px;top:240.21px;font-size:16.56px;color:#22652a;">Student, One</div>
<div class="t" style="left:784.57px;top:240.21px;font-size:15.82px;color:#333;letter-spacing:-0.16px;">(12:00 AM)</div>
<div class="t" style="left:543.24px;top:271.91px;font-size:16.45px;color:#333;">Mar 04 2026</div>
<div class="t" style="left:683.55px;top:271.90px;font-size:16.15px;color:#333;">Armstrong, Beau (12:00 AM)</div>
<div class="t" style="left:543.27px;top:306.21px;font-size:15.82px;color:#111;font-weight:700;letter-spacing:-0.333px;">OVERDUE</div>
<div class="t" style="left:543.24px;top:338.60px;font-size:16.45px;color:#333;">Mar 03 2026</div>
<div class="t" style="left:683.53px;top:339.61px;font-size:16.63px;color:#b3111e;">Ankunding, Jerry</div>
<div class="t" style="left:812.27px;top:339.60px;font-size:15.82px;color:#333;letter-spacing:-0.16px;">(12:00 AM)</div>
<div class="t" style="left:970.94px;top:174.81px;font-size:16.52px;color:#d5ece7;">Scheduled Communications (2)</div>
<div class="t" style="left:983.46px;top:205.90px;font-size:16.11px;color:#333;">Mar 09 2026</div>
<div class="t" style="left:1155.32px;top:206.91px;font-size:16.91px;color:#22652a;">Moen, Arvel</div>
<div class="t" style="left:983.46px;top:238.90px;font-size:16.11px;color:#333;">Mar 04 2026</div>
<div class="t" style="left:1155.32px;top:239.91px;font-size:16.91px;color:#333;">Bartoletti, Brooklyn</div>
<div class="t" style="left:172.88px;top:577.00px;font-size:12.9px;color:#d5ece7;">Notes</div>
<div class="t" style="left:374.20px;top:577.01px;font-size:12.52px;color:#d5ece7;">Events</div>
<div class="t" style="left:576.89px;top:577.01px;font-size:12.78px;color:#eef7f5;">Communications</div>
<div class="t" style="left:835.29px;top:577.01px;font-size:12.69px;color:#d5ece7;">Status History</div>
<div class="t" style="left:1081.18px;top:576.01px;font-size:13.08px;color:#d5ece7;letter-spacing:0.176px;">Audit</div>
<div class="t" style="left:1292.28px;top:576.01px;font-size:13.08px;color:#d5ece7;letter-spacing:0.784px;">All</div>
<div class="t" style="left:312.92px;top:623.21px;font-size:14.44px;color:#777;">Search By</div>
<div class="t" style="left:104.99px;top:666.00px;font-size:12.77px;color:#333;font-weight:400;">Type</div>
<div class="t" style="left:207.88px;top:666.00px;font-size:12.93px;color:#333;font-weight:400;">Direction</div>
<div class="t" style="left:288.89px;top:666.01px;font-size:12.76px;color:#333;font-weight:400;">Description</div>
<div class="t" style="left:925.68px;top:666.00px;font-size:12.93px;color:#333;font-weight:400;">User</div>
<div class="t" style="left:1359.00px;top:666.01px;font-size:12.48px;color:#333;font-weight:400;">Date</div>
<div class="t" style="left:104.85px;top:694.31px;font-size:16.26px;color:#333;">Chat</div>
<div class="t" style="left:288.73px;top:695.30px;font-size:16.7px;color:#333;">Hello Zina</div>
<div class="t" style="left:925.55px;top:694.31px;font-size:16.29px;color:#333;">Skoko, Valentina</div>
<div class="t" style="left:1181.35px;top:694.31px;font-size:16.22px;color:#333;letter-spacing:-0.149px;">02-27-2026 03:18:42 pm</div>
<div class="t" style="left:104.84px;top:728.30px;font-size:16.46px;color:#333;">Email</div>
<div class="t" style="left:317.05px;top:728.31px;font-size:16.22px;color:#333;letter-spacing:-0.233px;">02-09-2026Zina Skoko12351 W. Star Ave.Avondale,Arizona&nbsp; 85323PAY…</div>
<div class="t" style="left:925.55px;top:728.31px;font-size:16.29px;color:#333;">Skoko, Valentina</div>
<div class="t" style="left:1176.34px;top:728.31px;font-size:16.38px;color:#333;">02-09-2026 04:59:47 pm</div>
<div class="t" style="left:104.85px;top:762.31px;font-size:16.26px;color:#333;">Chat</div>
<div class="t" style="left:288.70px;top:762.30px;font-size:17.38px;color:#333;">Hello</div>
<div class="t" style="left:925.55px;top:762.31px;font-size:16.29px;color:#333;">Skoko, Valentina</div>
<div class="t" style="left:1175.34px;top:762.31px;font-size:16.47px;color:#333;">02-03-2026 07:08:07 pm</div>
<div class="t" style="left:1175.78px;top:796.91px;font-size:12.98px;color:#444;letter-spacing:-0.318px;">Records per page:</div>
<div class="t" style="left:1284.94px;top:796.90px;font-size:13.95px;color:#444;letter-spacing:0.361px;">30</div>
<div class="t" style="left:1339.48px;top:796.91px;font-size:12.98px;color:#444;letter-spacing:-0.539px;">1-3 of 3</div>
<div class="t" style="left:1421.69px;top:175.81px;font-size:20.35px;color:#fff;letter-spacing:0.171px;">Skoko, Zina (999936493)</div>
<div class="t" style="left:1421.68px;top:358.51px;font-size:13.0px;color:#444;">Email:</div>
<div class="t" style="left:1531.82px;top:357.21px;font-size:16.92px;color:#333;">valentina@campuscloudservices.com</div>
<div class="t" style="left:1421.66px;top:406.41px;font-size:13.5px;color:#444;">Enrollment:</div>
<div class="t" style="left:1421.53px;top:429.01px;font-size:16.75px;color:#333;">Digital Film Associate Degree (1) Current Student</div>
<div class="t" style="left:1421.67px;top:458.40px;font-size:13.26px;color:#444;">Mobile Phone:</div>
<div class="t" style="left:1531.85px;top:455.40px;font-size:16.22px;color:#333;letter-spacing:-0.198px;">(623) 594 - 2222</div>
<div class="t" style="left:1409.94px;top:580.41px;font-size:16.45px;color:#e3f2ef;">Student To-Dos (0)</div>
<div class="t" style="left:1409.94px;top:823.30px;font-size:16.57px;color:#e3f2ef;">Student Communications (0)</div>
<div class="t" style="left:241.58px;top:1042.41px;font-size:18.06px;color:#e3f2ef;">All</div>
<div class="t" style="left:291.32px;top:1043.40px;font-size:17.03px;color:#e3f2ef;letter-spacing:-0.296px;">Leads</div>
<div class="t" style="left:366.32px;top:1043.40px;font-size:17.03px;color:#e3f2ef;letter-spacing:-0.035px;">Enrollments</div>
<div class="t" style="left:842.25px;top:1046.01px;font-size:13.81px;color:#e3f2ef;">CALENDAR</div>
<div class="t" style="left:979.27px;top:1046.01px;font-size:13.25px;color:#e3f2ef;">FILTERS</div>
<div class="t" style="left:1582.14px;top:1046.21px;font-size:13.93px;color:#e3f2ef;">STUDENT ACTION</div>
<div class="t" style="left:1763.15px;top:1046.21px;font-size:13.69px;color:#e3f2ef;">USER ACTION</div>
</body></html>
